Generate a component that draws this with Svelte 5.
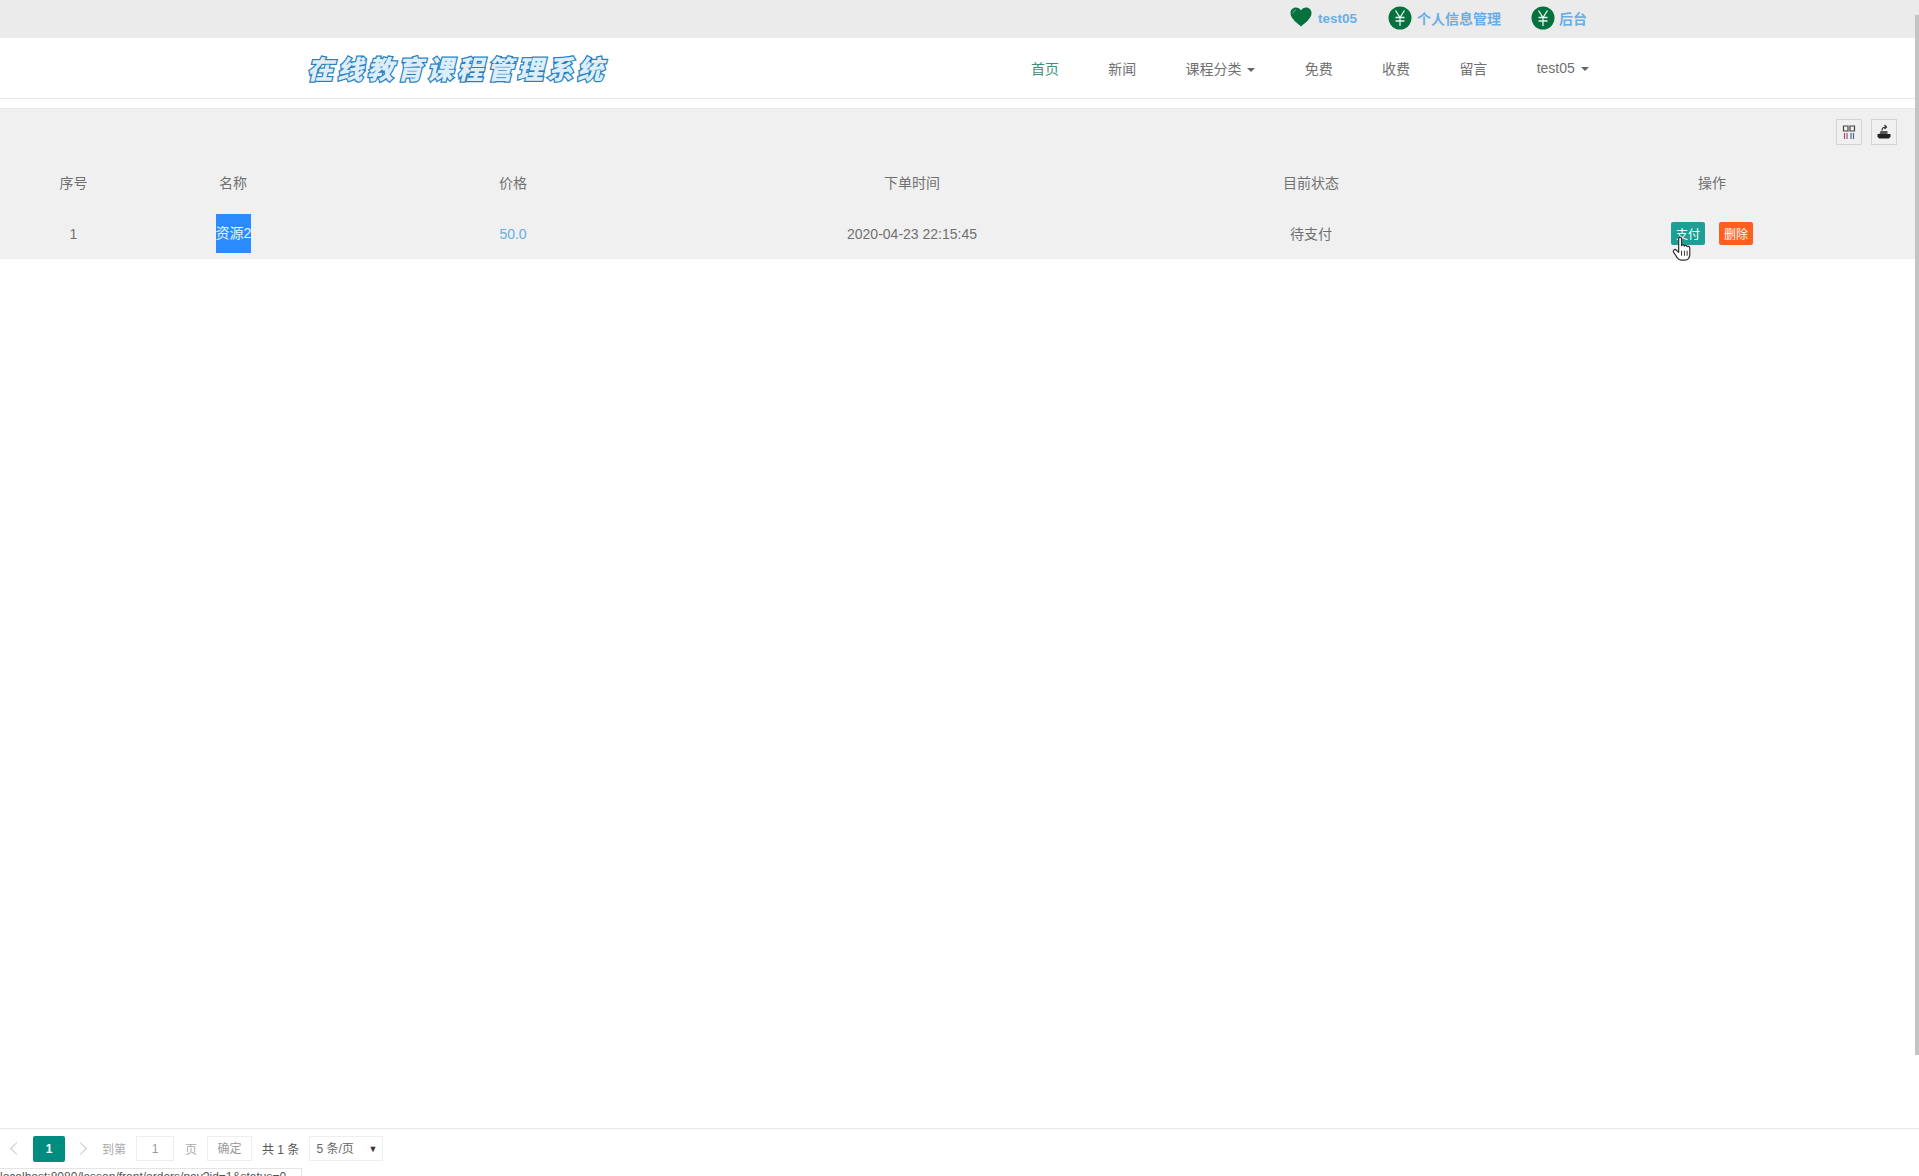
<script>
  const navItems = [
    { label: '首页', active: true },
    { label: '新闻' },
    { label: '课程分类', caret: true },
    { label: '免费' },
    { label: '收费' },
    { label: '留言' },
    { label: 'test05', caret: true }
  ];
  const columns = ['序号', '名称', '价格', '下单时间', '目前状态', '操作'];
</script>

{#snippet yen()}
  <svg class="yen" viewBox="0 0 24 24" width="24" height="24">
    <circle cx="12" cy="12" r="11.5" fill="#06703f" />
    <path d="M7.5 4.5L12 11.5L16.5 4.5M12 11.5V20M7.5 11.5H16.5M7.5 15H16.5" fill="none" stroke="#e8f5ee" stroke-width="1.3" />
  </svg>
{/snippet}

<div class="page">
  <div class="topbar">
    <a class="top-link first">
      <svg class="heart" viewBox="0 0 22 20" width="22" height="20">
        <path d="M11 19.5C8 16.5 0.5 12 0.5 6C0.5 2.8 3 0.5 5.8 0.5C8 0.5 10 1.7 11 3.6C12 1.7 14 0.5 16.2 0.5C19 0.5 21.5 2.8 21.5 6C21.5 12 14 16.5 11 19.5Z" fill="#06703f" />
        <path d="M3 6.5C3 4.5 4.3 3.2 6 3" fill="none" stroke="#5fb58a" stroke-width="1" />
      </svg>
      <span>test05</span>
    </a>
    <a class="top-link second">
      {@render yen()}
      <span>个人信息管理</span>
    </a>
    <a class="top-link third">
      {@render yen()}
      <span>后台</span>
    </a>
  </div>

  <header class="navbar">
    <div class="logo">在线教育课程管理系统</div>
    <nav class="nav">
      {#each navItems as item}
        <a class="nav-item" class:active={item.active}>
          {item.label}
          {#if item.caret}<i class="caret"></i>{/if}
        </a>
      {/each}
    </nav>
  </header>

  <main class="main">
    <section class="table-wrap">
      <div class="toolbar">
        <button class="tool" aria-label="筛选列">
          <svg viewBox="0 0 14 14" width="14" height="14">
            <path d="M1.5 1h4.5v5h-4.5zM8 1h4.5v5h-4.5z" fill="none" stroke="#444" stroke-width="1.2" />
            <path d="M2.5 8v6M5 8v6" stroke="#a0527a" stroke-width="1.2" />
            <path d="M9 8v6M11.5 8v6" stroke="#4a6a8a" stroke-width="1.2" />
          </svg>
        </button>
        <button class="tool" aria-label="导出">
          <svg viewBox="0 0 16 16" width="16" height="16">
            <path d="M1.5 10h13v2.5l-1.5 2h-10l-1.5-2z" fill="#222" />
            <path d="M3.5 10l1-3h7v3z" fill="#555" />
            <path d="M6 6.5C6 4 7.5 3 10 3M8.5 1l2 2-2 2" fill="none" stroke="#333" stroke-width="1.2" />
          </svg>
        </button>
      </div>
      <div class="row head">
        {#each columns as col}
          <div class="cell">{col}</div>
        {/each}
      </div>
      <div class="row body">
        <div class="cell">1</div>
        <div class="cell"><span class="name">资源2</span></div>
        <div class="cell price">50.0</div>
        <div class="cell">2020-04-23 22:15:45</div>
        <div class="cell">待支付</div>
        <div class="cell actions">
          <button class="btn pay">支付</button>
          <button class="btn del">删除</button>
          <svg class="hand" viewBox="0 0 18 24" width="20" height="27">
            <path d="M6 13V3.2C6 1.6 8.6 1.6 8.6 3.2V9.5C9 8.4 11 8.4 11.2 9.8C11.6 8.9 13.4 9 13.6 10.4C14.2 9.7 16 10 16 11.6V17C16 20 14.5 22.5 11.5 22.5H8.5C6.5 22.5 5.5 21.5 4.5 20L1.4 15.2C0.6 13.6 2.6 12.2 3.8 13.4L6 15.5Z" fill="#fff" stroke="#333" stroke-width="1.1" stroke-linejoin="round" />
            <path d="M8.6 14v4.5M11.2 14v4.5M13.6 14v4.5" stroke="#333" stroke-width="0.9" />
          </svg>
        </div>
      </div>
    </section>
  </main>

  <footer class="pager">
    <span class="arrow prev"></span>
    <span class="current">1</span>
    <span class="arrow next"></span>
    <span class="muted to">到第</span>
    <span class="box input">1</span>
    <span class="muted unit">页</span>
    <span class="box ok">确定</span>
    <span class="total">共 1 条</span>
    <span class="box size">5 条/页<i class="size-caret">▼</i></span>
  </footer>
  <div class="status"><span>localhost:8080/lesson/front/orders/pay?id=1&amp;status=0</span></div>

  <div class="scrollbar"></div>
</div>

<style>
  :global(body) {
    margin: 0;
    background: #fff;
  }
  .page {
    position: relative;
    display: flex;
    flex-direction: column;
    height: 1176px;
    overflow: hidden;
    font-family: "Liberation Sans", "Noto Sans CJK SC", sans-serif;
    font-size: 14px;
    color: #707070;
  }
  .topbar {
    display: flex;
    align-items: center;
    height: 38px;
    background: #ebebeb;
    padding-left: 1290px;
    flex: none;
  }
  .top-link {
    display: flex;
    align-items: center;
    color: #69aee9;
    font-weight: bold;
    font-size: 14px;
    line-height: 16px;
  }
  .top-link.first {
    gap: 6px;
    font-size: 13.5px;
    width: 98px;
  }
  .top-link.second {
    gap: 5px;
    width: 143px;
  }
  .top-link.third {
    gap: 4px;
  }
  .heart {
    margin-top: -4px;
  }
  .yen {
    margin-top: -3px;
  }
  .navbar {
    display: flex;
    align-items: center;
    height: 60px;
    padding-left: 307px;
    background: #fff;
    border-bottom: 1px solid #e8e8e8;
    flex: none;
  }
  .logo {
    width: 301px;
    margin-top: -2px;
    font-family: "Noto Sans CJK SC", sans-serif;
    font-size: 26px;
    font-weight: 900;
    font-style: italic;
    letter-spacing: 4px;
    white-space: nowrap;
    color: #dceef9;
    -webkit-text-stroke: 2.5px #2a7fc0;
    paint-order: stroke fill;
  }
  .nav {
    display: flex;
    align-items: center;
    gap: 49.3px;
    margin-left: 423px;
    margin-top: -1px;
  }
  .nav-item {
    color: #707070;
    white-space: nowrap;
  }
  .nav-item.active {
    color: #3f8f7c;
  }
  .caret {
    display: inline-block;
    margin-left: 2px;
    vertical-align: middle;
    border-left: 4px solid transparent;
    border-right: 4px solid transparent;
    border-top: 4px solid #666;
  }
  .main {
    flex: 1;
    padding-top: 9px;
  }
  .table-wrap {
    background: #f0f0f1;
    height: 151px;
    border-top: 1px solid #e8e8e8;
    box-sizing: border-box;
  }
  .toolbar {
    display: flex;
    justify-content: flex-end;
    gap: 9px;
    height: 49px;
    padding: 10px 22px 0 0;
    box-sizing: border-box;
  }
  .tool {
    display: flex;
    align-items: center;
    justify-content: center;
    width: 26px;
    height: 26px;
    padding: 0;
    background: transparent;
    border: 1px solid #d4d4d4;
  }
  .row {
    display: grid;
    grid-template-columns: 147px 172px 388px 410px 388px 414px;
    align-items: center;
    text-align: center;
  }
  .row.head {
    height: 50px;
  }
  .row.body {
    height: 51px;
  }
  .cell {
    position: relative;
    line-height: 16px;
  }
  .name {
    display: block;
    width: 35px;
    height: 39px;
    margin: 0 auto;
    line-height: 39px;
    background: #2a8bff;
    color: #e8f4ff;
    white-space: nowrap;
  }
  .price {
    color: #69aee0;
  }
  .actions {
    display: flex;
    justify-content: center;
    gap: 14px;
    box-sizing: border-box;
  }
  .btn {
    width: 34px;
    height: 23px;
    padding: 0;
    border: none;
    border-radius: 2px;
    color: #fff;
    font: 12px "Liberation Sans", "Noto Sans CJK SC", sans-serif;
  }
  .pay {
    background: #1e9f95;
  }
  .del {
    background: #ff5f1f;
  }
  .hand {
    position: absolute;
    left: 167px;
    top: 13px;
  }
  .pager {
    display: flex;
    align-items: center;
    flex: none;
    height: 40px;
    padding-left: 10px;
    border-top: 1px solid #e8e8e8;
    font-size: 12px;
    box-sizing: border-box;
  }
  .arrow {
    width: 8px;
    height: 8px;
    border-left: 1.5px solid #c8c8c8;
    border-bottom: 1.5px solid #c8c8c8;
  }
  .arrow.prev {
    transform: rotate(45deg);
    margin-left: 2px;
  }
  .arrow.next {
    transform: rotate(225deg);
    margin-left: 11px;
  }
  .current {
    width: 32px;
    height: 26px;
    margin-left: 12px;
    line-height: 26px;
    text-align: center;
    background: #008c7f;
    border-radius: 2px;
    color: #fff;
    font-weight: bold;
  }
  .muted {
    color: #aaa;
  }
  .to {
    margin-left: 17px;
  }
  .box {
    display: block;
    height: 25px;
    line-height: 24px;
    box-sizing: border-box;
    border: 1px solid #eee;
    text-align: center;
    color: #999;
  }
  .input {
    width: 38px;
    margin-left: 10px;
  }
  .unit {
    margin-left: 11px;
  }
  .ok {
    width: 45px;
    margin-left: 10px;
  }
  .total {
    margin-left: 10px;
    color: #555;
  }
  .size {
    position: relative;
    width: 74px;
    margin-left: 10px;
    padding-left: 6px;
    text-align: left;
    color: #666;
  }
  .size-caret {
    position: absolute;
    right: 5px;
    top: 0;
    font-style: normal;
    font-size: 9px;
    color: #333;
  }
  .status {
    flex: none;
    height: 8px;
    width: 302px;
    overflow: hidden;
    border-top: 1px solid #e4e4e4;
    border-right: 1px solid #e4e4e4;
    box-sizing: border-box;
    font-size: 12px;
    line-height: 16px;
    color: #555;
    white-space: nowrap;
  }
  .scrollbar {
    position: absolute;
    top: 15px;
    right: 0;
    width: 4px;
    height: 1040px;
    background: #c4c4c4;
  }
</style>
